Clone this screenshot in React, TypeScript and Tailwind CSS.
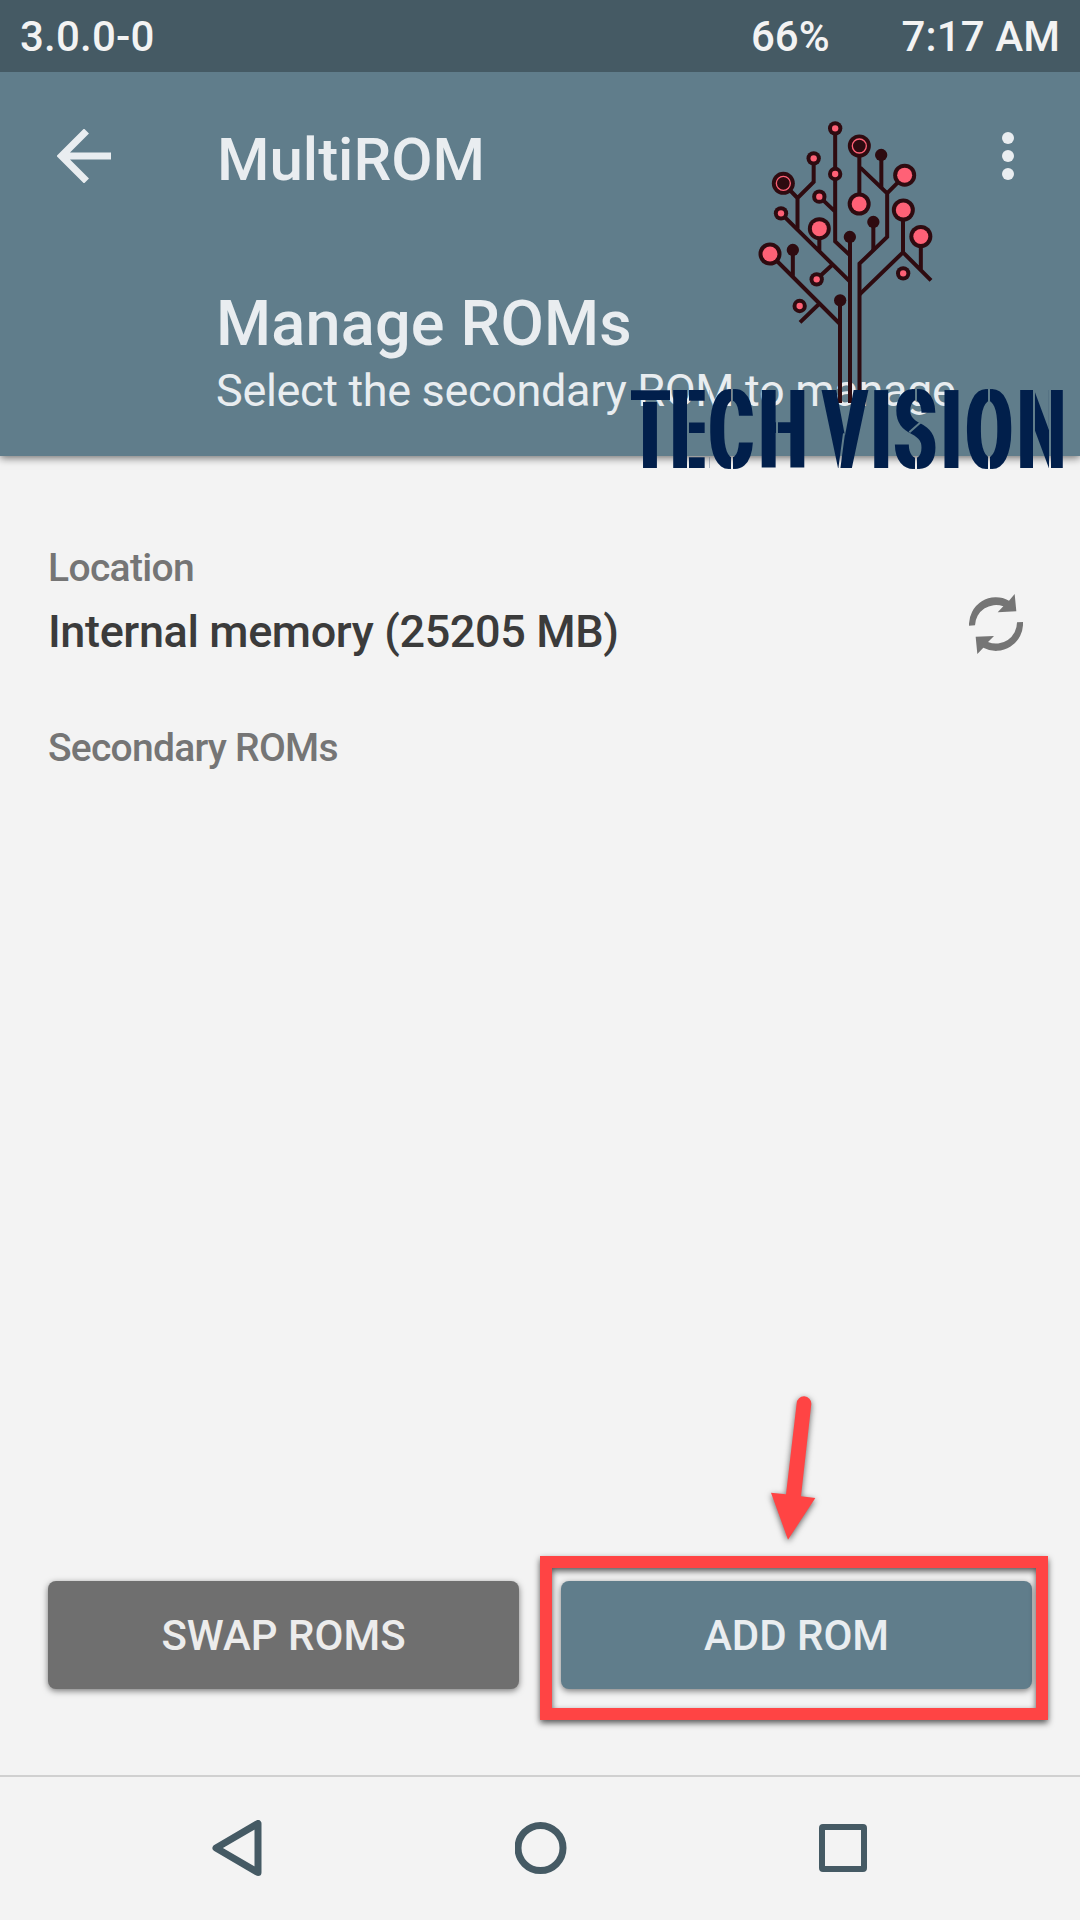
interface TreeNode {
  x: number;
  y: number;
}

const SMALL_NODES: TreeNode[] = [
  { x: 285.5, y: 55 },
  { x: 221, y: 145 },
  { x: 285.5, y: 192 },
  { x: 238, y: 260 },
  { x: 123, y: 310 },
  { x: 230, y: 508 },
  { x: 179, y: 588 },
  { x: 489.5, y: 490 },
];

const LARGE_NODES: TreeNode[] = [
  { x: 494, y: 195.5 },
  { x: 357.5, y: 282 },
  { x: 490, y: 300 },
  { x: 542.5, y: 379.5 },
  { x: 238, y: 356 },
  { x: 90, y: 432 },
];

const RING_NODES: TreeNode[] = [
  { x: 358, y: 108 },
  { x: 130, y: 220 },
];

const SOLID_NODES: TreeNode[] = [
  { x: 423.5, y: 135 },
  { x: 400, y: 336 },
  { x: 329.5, y: 381 },
  { x: 158.5, y: 420 },
  { x: 300.5, y: 571 },
];

function CircuitTree() {
  return (
    <svg
      viewBox="0 0 660 900"
      className="absolute left-[740px] top-[110px] h-[300px] w-[220px]">
      <g fill="none" stroke="#2e0b10" strokeWidth="12">
        <path d="M300 571V879M330 381V879M358.5 842V461L441.5 381V250L361 173" />
        <path d="M358 108V282M424 135V235M441 250L494 197M400 336V420" />
        <path d="M285.5 55V394L330 436M238 260L285.5 305" />
        <path d="M221 145V216L172.5 264V356M172.5 264L130 220" />
        <path d="M123 310L330 515M238 356V424M277 464L230 508" />
        <path d="M90 432L300 642M158.5 420V502M237 582L180 637" />
        <path d="M359 553L489 427V300M489 427L573 511M542.5 380V480" />
      </g>
      {SMALL_NODES.map(({ x, y }) => (
        <g key={`${x}-${y}`}>
          <circle cx={x} cy={y} r="21.5" fill="#2e0b10" />
          <circle cx={x} cy={y} r="9.5" fill="#ff6176" />
        </g>
      ))}
      {LARGE_NODES.map(({ x, y }) => (
        <g key={`${x}-${y}`}>
          <circle cx={x} cy={y} r="34.5" fill="#2e0b10" />
          <circle cx={x} cy={y} r="22.5" fill="#ff6176" />
        </g>
      ))}
      {RING_NODES.map(({ x, y }) => (
        <g key={`${x}-${y}`}>
          <circle cx={x} cy={y} r="34.5" fill="#2e0b10" />
          <circle cx={x} cy={y} r="21" fill="none" stroke="#ff6176" strokeWidth="4" />
        </g>
      ))}
      {SOLID_NODES.map(({ x, y }) => (
        <circle key={`${x}-${y}`} cx={x} cy={y} r="18.5" fill="#2e0b10" />
      ))}
    </svg>
  );
}

function Wordmark() {
  return (
    <svg
      viewBox="0 0 1440 360"
      className="absolute left-[600px] top-[370px] h-[120px] w-[480px]">
      {/* thickens the stems only, the crossbars keep their weight */}
      <filter
        id="stems"
        filterUnits="userSpaceOnUse"
        colorInterpolationFilters="sRGB"
        x="0"
        y="0"
        width="1440"
        height="360">
        <feMorphology operator="dilate" radius="9 0" />
      </filter>
      {/* stencil cuts */}
      <mask id="stencil" maskUnits="userSpaceOnUse" x="0" y="0" width="1440" height="360">
        <rect width="1440" height="360" fill="#fff" />
        <rect x="80" y="50" width="13" height="50" />
        <rect x="210" y="50" width="8" height="250" />
        <rect x="314" y="50" width="14" height="250" />
        <g stroke="#000" strokeWidth="6" fill="none">
          <path d="M93 93H212M264 40V310M396 40V110M396 240V310M531 40V310" />
          <path d="M732 190L718 296M948 40V100M948 240V310M928 187L962 157" />
          <path d="M1167 40V110M1167 240V310M1302 40V310M1350 40V310" />
        </g>
      </mask>
      <g mask="url(#stencil)">
        <g filter="url(#stems)">
          <text
            transform="scale(0.59 1)"
            y="293"
            fontSize="330"
            fill="#011f4b"
            className="font-['Roboto'] font-medium">
            <tspan x="154 363 559 813">TECH</tspan>
            <tspan x="1139 1383 1502 1740 1865 2128">VISION</tspan>
          </text>
        </g>
      </g>
    </svg>
  );
}

function StatusBar() {
  return (
    <div className="relative z-10 flex h-[72px] items-center bg-[#455a64] px-5 pt-px text-[42px] font-medium text-[#f3f3f3]">
      <span className="tracking-[0.2px]">3.0.0-0</span>
      <span className="ml-auto">66%</span>
      <span className="ml-[72px] tracking-[0.1px]">7:17 AM</span>
    </div>
  );
}

function Header() {
  return (
    <header className="h-[384px] bg-[#607d8b] text-[#e9edf0] shadow-[0_2px_8px_rgba(0,0,0,0.55)]">
      <div className="flex h-[168px] items-center">
        <svg viewBox="0 0 54 54" className="ml-[57px] h-[54px] w-[54px]">
          <path
            d="M54 27H6M29.5 2L4.5 27L29.5 52"
            fill="none"
            stroke="currentColor"
            strokeWidth="7"
          />
        </svg>
        <h1 className="ml-[106px] pt-[7px] text-[60px] font-medium">MultiROM</h1>
        <svg viewBox="0 0 12 48" className="ml-auto mr-[66px] h-12 w-3" fill="currentColor">
          <circle cx="6" cy="6" r="6" />
          <circle cx="6" cy="24" r="6" />
          <circle cx="6" cy="42" r="6" />
        </svg>
      </div>
      <div className="pl-[216px] pt-12">
        <h2 className="text-[63px] font-medium leading-[72px] tracking-[0.2px]">Manage ROMs</h2>
        <p className="pt-px text-[45px] leading-[60px] tracking-[-0.34px]">
          Select the secondary ROM to manage
        </p>
      </div>
    </header>
  );
}

function RefreshIcon() {
  return (
    <svg viewBox="0 0 162 180" className="h-[60px] w-[54px]" fill="#757575">
      <path d="M0 95A81 82 0 0 1 120 20L137 0L142 52L86 55L103 37A63 63 0 0 0 18 94Z" />
      <path d="M162 84A81 82 0 0 1 43 161L25 180L20 128L75 126L57 144A63 63 0 0 0 144 85Z" />
    </svg>
  );
}

function Annotations() {
  return (
    <>
      <svg
        viewBox="0 0 360 600"
        className="absolute left-[740px] top-[1370px] h-[200px] w-[120px] drop-shadow-[0_2px_3px_rgba(0,0,0,0.6)]">
        <path
          d="M170 100A22 22 0 0 1 214 102L183 379L226 384L144 509L93 368L138 373Z"
          fill="#ff4444"
        />
      </svg>
      <div className="absolute left-[540px] top-[1556px] h-[164px] w-[508px] border-[12px] border-[#ff4444] drop-shadow-[0_3px_3px_rgba(0,0,0,0.65)]" />
    </>
  );
}

function NavBar() {
  return (
    <nav className="flex h-[145px] items-center justify-between border-t-2 border-[#d0d0d0] pb-0.5 pl-[212px] pr-[213px]">
      <svg viewBox="0 0 50 56" className="h-14 w-[50px]" fill="none" stroke="#455a64">
        <path d="M46 3.5V52.5L4 28Z" strokeWidth="7" strokeLinejoin="round" />
      </svg>
      <svg viewBox="0.5 0 52 52" className="h-[52px] w-[52px]" fill="none" stroke="#455a64">
        <circle cx="26" cy="26" r="22.5" strokeWidth="7" />
      </svg>
      <svg viewBox="0 0 48 48" className="h-12 w-12" fill="none" stroke="#455a64">
        <rect x="3" y="3" width="42" height="42" rx="1" strokeWidth="6" />
      </svg>
    </nav>
  );
}

function App() {
  return (
    <div className="relative flex h-[1920px] w-[1080px] flex-col overflow-hidden bg-[#f3f3f3] font-['Roboto',sans-serif]">
      <StatusBar />
      <Header />
      <main className="flex flex-1 flex-col px-12 pt-[88px]">
        <div className="flex items-center justify-between">
          <div>
            <p className="text-[39px] font-medium leading-[48px] tracking-[-0.65px] text-[#757575]">
              Location
            </p>
            <p className="mt-2.5 text-[45px] font-medium leading-[60px] tracking-[-0.38px] text-[#3b3b3b]">
              Internal memory (25205 MB)
            </p>
          </div>
          <div className="mr-[9px] pt-[42px]">
            <RefreshIcon />
          </div>
        </div>
        <p className="mt-[62px] text-[39px] font-medium leading-[48px] tracking-[-0.75px] text-[#757575]">
          Secondary ROMs
        </p>
        <div className="mb-[86px] mt-auto flex gap-[42px]">
          <button
            type="button"
            className="h-[108px] flex-1 rounded-lg bg-[#6f6f6f] text-[42px] font-medium text-[#ececec] shadow-[0_2px_6px_rgba(0,0,0,0.5)]">
            SWAP ROMS
          </button>
          <button
            type="button"
            className="h-[108px] flex-1 rounded-lg bg-[#607d8b] text-[42px] font-medium text-[#e9edf0] shadow-[0_2px_6px_rgba(0,0,0,0.5)]">
            ADD ROM
          </button>
        </div>
      </main>
      <NavBar />
      <CircuitTree />
      <Wordmark />
      <Annotations />
    </div>
  );
}

export default App;
